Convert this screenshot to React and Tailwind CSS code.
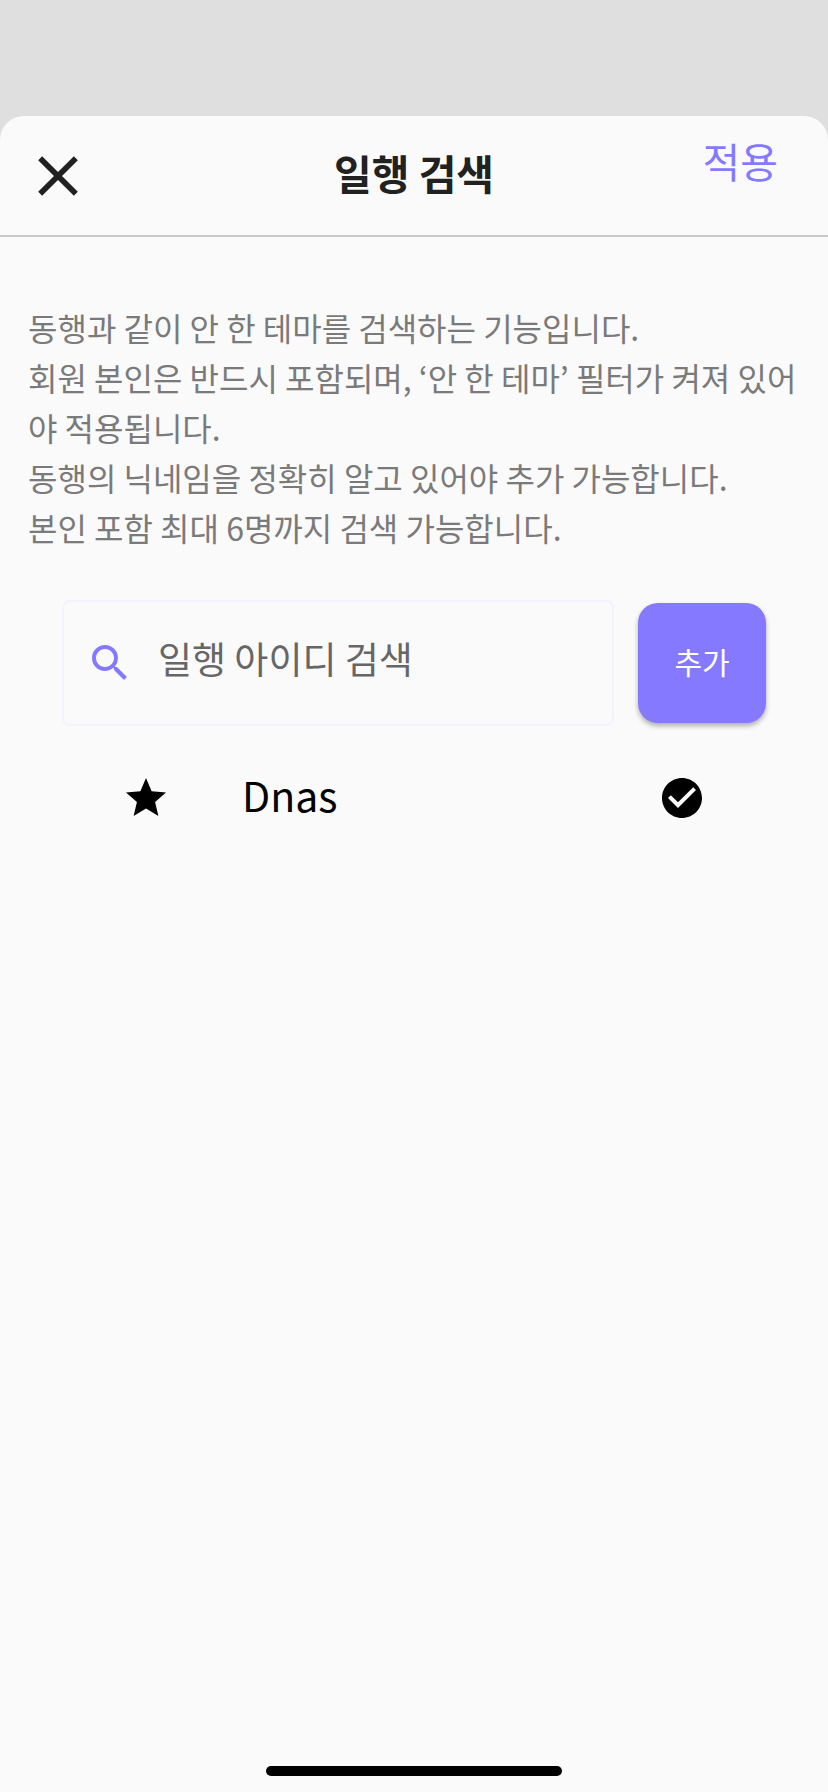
import { useState } from "react";
import { MdClose, MdSearch, MdStar, MdCheckCircle } from "react-icons/md";

const guideLines = [
  "동행과 같이 안 한 테마를 검색하는 기능입니다.",
  "회원 본인은 반드시 포함되며, ‘안 한 테마’ 필터가 켜져 있어야 적용됩니다.",
  "동행의 닉네임을 정확히 알고 있어야 추가 가능합니다.",
  "본인 포함 최대 6명까지 검색 가능합니다.",
];

const App = () => {
  const [keyword, setKeyword] = useState("");
  const [members, setMembers] = useState(["Dnas"]);

  const onClickAdd = () => {
    const name = keyword.trim();
    if (!name || members.includes(name) || members.length >= 6) return;
    setMembers([...members, name]);
    setKeyword("");
  };

  return (
    <div className="flex min-h-screen flex-col bg-[#dfdfdf] pt-29 font-['Noto_Sans_CJK_KR',sans-serif]">
      <div className="flex grow flex-col rounded-t-3xl bg-[#fafafa]">
        <header className="grid h-[121px] grid-cols-3 items-start border-b-2 border-[#c8c8c8] px-6">
          <button type="button" aria-label="닫기" className="mt-[26px] justify-self-start">
            <MdClose className="size-17 text-[#212121]" />
          </button>
          <h1 className="mt-7 text-center text-[41px] leading-14 font-bold text-[#212121]">
            일행 검색
          </h1>
          <button
            type="button"
            className="mt-4 mr-[26px] justify-self-end text-[41px] leading-14 text-[#857aff]"
          >
            적용
          </button>
        </header>

        <main className="pt-[65px]">
          <div className="px-7 text-[32px] leading-[50px] break-all text-[#7a7a7a]">
            {guideLines.map((line) => (
              <p key={line}>{line}</p>
            ))}
          </div>

          <div className="mt-12 flex items-center gap-6 px-[62px]">
            <label className="flex h-[126px] grow items-center gap-6 rounded-lg border-2 border-[#f3f2ff] px-[22px]">
              <MdSearch className="size-12 shrink-0 text-[#857aff]" />
              <input
                type="text"
                aria-label="일행 아이디 검색"
                placeholder="일행 아이디 검색"
                value={keyword}
                onChange={(e) => setKeyword(e.target.value)}
                className="w-full bg-transparent pb-2 text-[37px] text-black outline-none placeholder:text-[#666666]"
              />
            </label>
            <button
              type="button"
              onClick={onClickAdd}
              className="h-30 w-32 shrink-0 rounded-[20px] bg-[#857aff] pb-1 text-[30px] text-white shadow-[0_3px_5px_rgba(0,0,0,0.3)]"
            >
              추가
            </button>
          </div>

          <ul className="mt-10 px-[122px]">
            {members.map((name) => (
              <li key={name} className="flex h-16 items-center">
                <MdStar className="size-12 shrink-0" />
                <span className="ml-18 grow pb-2 text-[41px] leading-14">{name}</span>
                <MdCheckCircle className="size-12 shrink-0" />
              </li>
            ))}
          </ul>
        </main>

        <div className="mx-auto mt-auto mb-4 h-[10px] w-[296px] rounded-full bg-black" />
      </div>
    </div>
  );
};

export default App;
